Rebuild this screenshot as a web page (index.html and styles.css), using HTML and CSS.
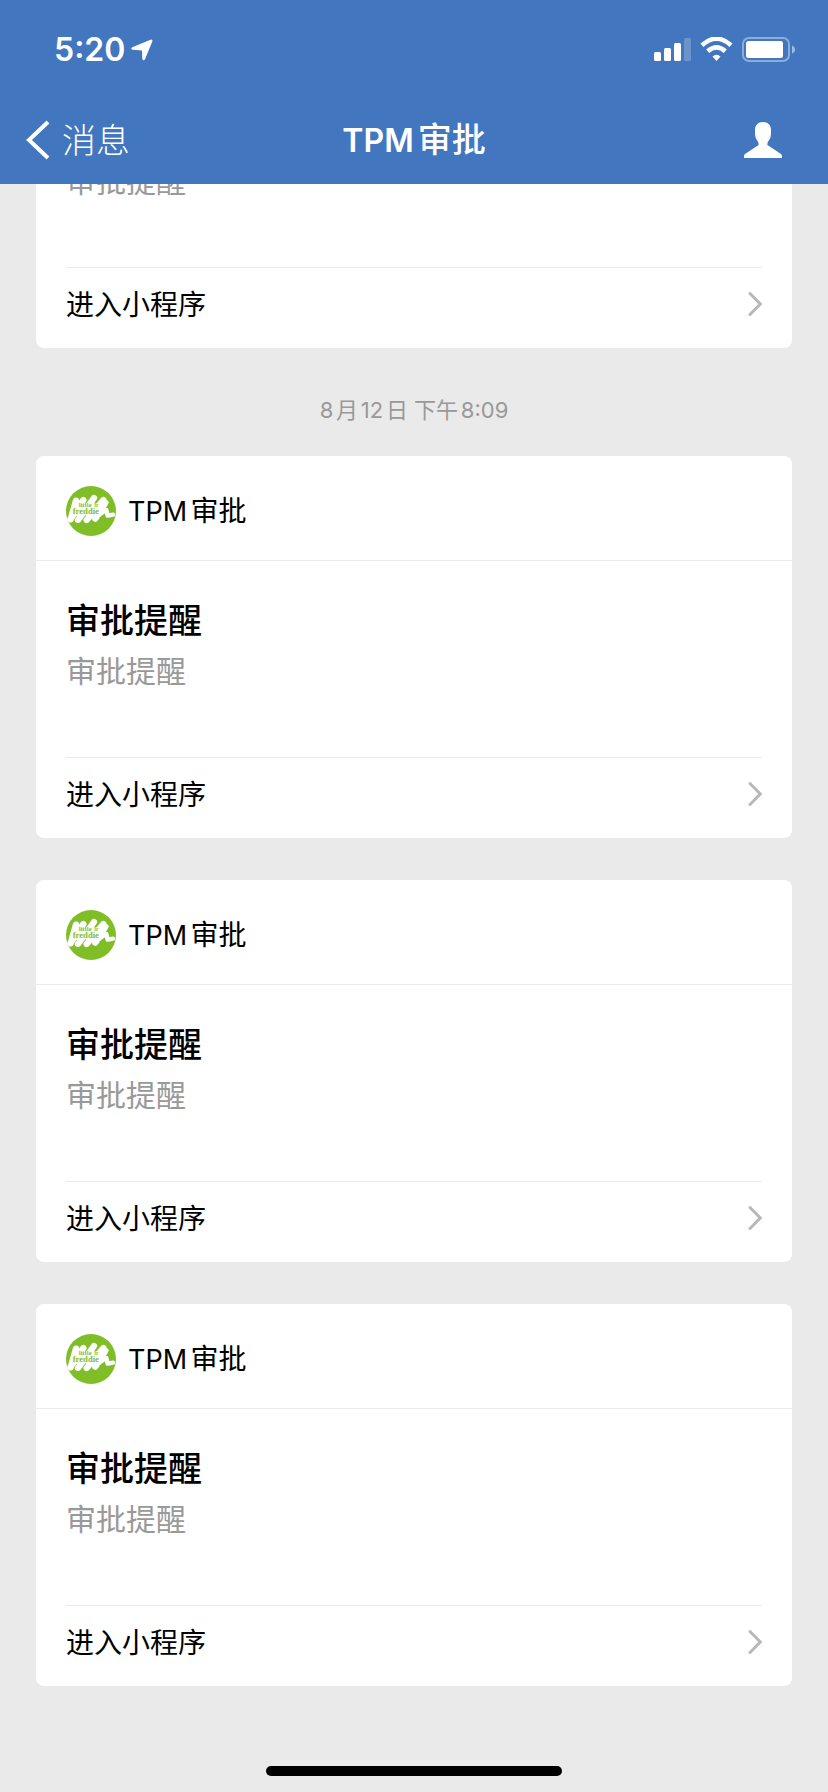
FILE: index.html
```html
<!DOCTYPE html>
<html lang="zh-CN">
<head>
<meta charset="utf-8">
<meta name="viewport" content="width=device-width, initial-scale=1">
<title>TPM审批</title>
<link rel="stylesheet" href="styles.css">
</head>
<body>
<div class="screen">
  <header class="top">
    <div class="status">
      <span class="clock">5:20</span>
      <svg class="locate" viewBox="0 0 22 22" width="22" height="22" aria-hidden="true">
        <path d="M1.300 8.200 19.500.7Q22 0 21.300 2.500L14 20.200Q12.500 22.500 11.300 20L11 11.500 1.500 10.800Q-.8 9.800 1.300 8.200Z" fill="#fff"/>
      </svg>
      <svg class="indicators" viewBox="0 0 142 26" width="142" height="26" aria-label="信号与电量">
        <g fill="#fff">
          <rect x="1" y="15" width="7" height="9" rx="1.500"/>
          <rect x="11" y="11" width="7" height="13" rx="1.500"/>
          <rect x="21" y="6" width="7" height="18" rx="1.500"/>
          <rect x="31" y="1" width="7" height="23" rx="1.500" opacity=".22"/>
          <path d="M63.500 24 59.500 19.500Q63.500 16 67.500 19.500Z"/>
          <rect x="93" y="4" width="37" height="17" rx="2.500"/>
          <path d="M139 8.500Q142 9.500 142 12.500T139 16.500Z" opacity=".5"/>
        </g>
        <g fill="none" stroke="#fff">
          <path d="M49 8.200Q63.500-4.800 78 8.200" stroke-width="4.600"/>
          <path d="M54.700 14.200Q63.500 6.400 72.300 14.200" stroke-width="4.600"/>
          <rect x="90" y="1" width="46" height="23" rx="6" stroke-width="2" opacity=".4"/>
        </g>
      </svg>
    </div>
    <nav class="bar">
      <a class="back" href="#">
        <svg viewBox="0 0 24 40" width="24" height="40" aria-hidden="true"><path d="M22 2 3 20 22 38" fill="none" stroke="#fff" stroke-width="4"/></svg>
        <span>消息</span>
      </a>
      <h1 class="bar-title"><span class="latin">TPM</span>审批</h1>
      <button class="profile" type="button" aria-label="个人资料">
        <svg viewBox="0 0 38 36" width="38" height="36" aria-hidden="true"><path d="M19 0C24 0 27 3 27 8V12Q27 16 24.500 19 23.200 20.500 23.400 23L37 32Q38 33 38 34V36H0V34Q0 33 1 32L14.600 23Q14.800 20.500 13.500 19 11 16 11 12V8C11 3 14 0 19 0Z" fill="#fff"/></svg>
      </button>
    </nav>
  </header>
  <main class="feed">
    <div class="messages">
      <article class="card">
        <header class="card-head">
          <svg class="logo" viewBox="0 0 150 150">
            <g id="logo">
              <circle cx="75" cy="75" r="75" fill="#7fbe26"/>
              <path d="M14 100 30 44M14 98 52 42M36 102 84 36M62 102 112 42M88 98 118 50" fill="none" stroke="#fff" stroke-width="19" stroke-linecap="round"/>
              <path d="M22 55 110 50 108 86 18 90Z" fill="#fff"/>
              <path d="M96 88 121 72 125 89 141 86" fill="none" stroke="#fff" stroke-width="13" stroke-linecap="round" stroke-linejoin="round"/>
              <text class="logo-text"><tspan x="38" y="63" font-size="20">little</tspan><tspan x="85" y="62" font-size="16">fr</tspan><tspan x="20" y="83" font-size="26">freddie</tspan></text>
            </g>
          </svg>
          <span class="app"><span class="latin">TPM</span>审批</span>
        </header>
        <div class="card-body"><h2>审批提醒</h2><p>审批提醒</p></div>
        <a class="card-link" href="#"><span>进入小程序</span><svg class="chevron" viewBox="0 0 14 26"><path id="chevron" d="M2 2.500 12.300 13 2 23.500" fill="none" stroke="#b8b8b8" stroke-width="3" stroke-linecap="round"/></svg></a>
      </article>
      <time class="stamp">8月12日 下午8:09</time>
      <article class="card">
        <header class="card-head"><svg class="logo" viewBox="0 0 150 150"><use href="#logo"/></svg><span class="app"><span class="latin">TPM</span>审批</span></header>
        <div class="card-body"><h2>审批提醒</h2><p>审批提醒</p></div>
        <a class="card-link" href="#"><span>进入小程序</span><svg class="chevron" viewBox="0 0 14 26"><use href="#chevron"/></svg></a>
      </article>
      <article class="card">
        <header class="card-head"><svg class="logo" viewBox="0 0 150 150"><use href="#logo"/></svg><span class="app"><span class="latin">TPM</span>审批</span></header>
        <div class="card-body"><h2>审批提醒</h2><p>审批提醒</p></div>
        <a class="card-link" href="#"><span>进入小程序</span><svg class="chevron" viewBox="0 0 14 26"><use href="#chevron"/></svg></a>
      </article>
      <article class="card">
        <header class="card-head"><svg class="logo" viewBox="0 0 150 150"><use href="#logo"/></svg><span class="app"><span class="latin">TPM</span>审批</span></header>
        <div class="card-body"><h2>审批提醒</h2><p>审批提醒</p></div>
        <a class="card-link" href="#"><span>进入小程序</span><svg class="chevron" viewBox="0 0 14 26"><use href="#chevron"/></svg></a>
      </article>
    </div>
  </main>
  <div class="home"></div>
</div>
</body>
</html>
```
FILE: styles.css
```css
* { box-sizing: border-box; }
body {
  margin: 0;
  background: #eaeaea;
  color: #000;
  font-family: Inter, "Noto Sans CJK SC", sans-serif;
  text-autospace: normal;
}
h1, h2, p { margin: 0; }
a { color: inherit; text-decoration: none; }
.screen {
  position: relative;
  display: flex;
  flex-direction: column;
  height: 100vh;
}
.top { flex: none; background: #4276bf; color: #fff; }
.status {
  display: flex;
  align-items: center;
  height: 96px;
  padding: 4px 33px 0 54px;
}
.clock { font-size: 32px; line-height: 42px; font-weight: 600; }
.locate { margin-left: 6px; }
.indicators { margin-left: auto; }
.bar {
  display: grid;
  grid-template-columns: 1fr auto 1fr;
  align-items: center;
  height: 88px;
  padding: 0 46px 0 26px;
}
.back {
  display: flex;
  align-items: center;
  gap: 12px;
  font-size: 34px;
  line-height: 50px;
  font-weight: 300;
}
.back span { padding-top: 2px; }
.bar-title {
  padding-left: 20px;
  font-size: 34px;
  line-height: 50px;
  font-weight: 500;
}
.bar-title .latin { font-size: 32px; font-weight: 600; }
.profile {
  justify-self: end;
  display: flex;
  padding: 0;
  border: 0;
  background: none;
}
.feed {
  flex: 1;
  min-height: 0;
  display: flex;
  flex-direction: column-reverse;
  overflow-y: auto;
  scrollbar-width: none;
}
.messages { flex: none; padding: 42px 36px 106px; }
.card {
  overflow: hidden;
  border-radius: 8px;
  background: #fff;
}
.card + .card { margin-top: 42px; }
.stamp {
  display: block;
  margin: 48px 0 32px;
  color: #999;
  font-size: 22px;
  line-height: 28px;
  text-align: center;
}
.card-head {
  display: flex;
  align-items: center;
  gap: 12px;
  padding: 30px 30px 24px;
  border-bottom: 1px solid #ebebeb;
}
.logo { width: 50px; height: 50px; }
.logo-text {
  fill: #7fbe26;
  font-family: "Liberation Serif", serif;
  font-weight: 700;
}
.app { font-size: 28px; line-height: 42px; }
.app .latin { font-size: 27px; }
.card-body { padding: 36px 30px 60px; }
.card-body h2 { font-size: 34px; line-height: 48px; font-weight: 500; }
.card-body p { color: #999; font-size: 30px; line-height: 52px; }
.card-link {
  display: flex;
  align-items: center;
  justify-content: space-between;
  height: 81px;
  margin: 0 30px;
  padding-bottom: 8px;
  border-top: 1px solid #ebebeb;
  font-size: 28px;
  line-height: 40px;
}
.card-link span { padding-top: 2px; }
.chevron { width: 14px; height: 26px; }
.home {
  position: absolute;
  bottom: 16px;
  left: 50%;
  width: 296px;
  height: 10px;
  margin-left: -148px;
  border-radius: 5px;
  background: #000;
}
```
